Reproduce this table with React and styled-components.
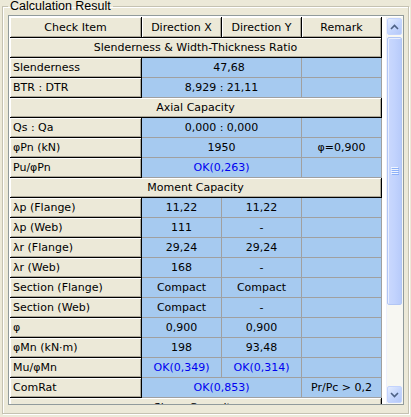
import React from 'react';
import styled, { createGlobalStyle, css } from 'styled-components';

const GlobalStyle = createGlobalStyle`
  html, body {
    margin: 0;
    padding: 0;
    background: #ece9d8;
  }
  body {
    width: 411px;
    height: 417px;
    overflow: hidden;
    font-family: "DejaVu Sans", "Liberation Sans", sans-serif;
    font-size: 11px;
    color: #000;
  }
`;

const Group = styled.fieldset`
  box-sizing: border-box;
  margin: 0 0 0 2px;
  width: 407px;
  height: 414px;
  padding: 0 0 0 5px;
  border: 1px solid #c5c2b2;
  box-shadow: inset 1px 1px #fff, 1px 1px #fff;
  border-radius: 0;
`;

const Legend = styled.legend`
  margin-left: 0;
  padding: 0 2px;
  font-family: "Liberation Sans", Arial, sans-serif;
  font-size: 12.5px;
  line-height: 13px;
  color: #000;
`;

const Frame = styled.div`
  box-sizing: border-box;
  width: 396px;
  height: 390px;
  margin-top: 2px;
  padding: 1px 0 0 1px;
  border: 1px solid #919b9c;
  background: #fff;
  display: flex;
  overflow: hidden;
`;

const Table = styled.div`
  width: 372px;
  display: flex;
  flex-direction: column;
  flex-shrink: 0;
`;

const Row = styled.div`
  display: grid;
  grid-template-columns: 132px 80px 80px 80px;
  height: ${(p) => (p.tall ? 21 : 20)}px;
  flex-shrink: 0;
`;

const raised = css`
  box-sizing: border-box;
  background: #ece9d8;
  border-right: 1px solid #000;
  border-bottom: 1px solid #000;
  box-shadow: inset 1px 1px #fff, inset -1px -1px #aca899;
  white-space: nowrap;
  overflow: hidden;
`;

const HeadCell = styled.div`
  ${raised};
  display: flex;
  align-items: center;
  justify-content: center;
`;

const SectionCell = styled.div`
  ${raised};
  grid-column: 1 / -1;
  display: flex;
  align-items: center;
  justify-content: center;
`;

const LabelCell = styled.div`
  ${raised};
  display: flex;
  align-items: center;
  padding-left: 3px;
`;

const DataCell = styled.div`
  box-sizing: border-box;
  background: #a6caf0;
  border-right: 1px solid #a0a0a0;
  border-bottom: 1px solid #a0a0a0;
  display: flex;
  align-items: center;
  justify-content: center;
  white-space: nowrap;
  padding-left: ${(p) => p.shift || 0}px;
  color: ${(p) => (p.ok ? '#0000f0' : '#000')};
  grid-column: ${(p) => (p.span ? `span ${p.span}` : 'auto')};
`;

const ScrollBar = styled.div`
  width: 17px;
  margin-left: 4px;
  display: flex;
  flex-direction: column;
  background: #f7f7f2;
  border-left: 1px solid #eef0fb;
`;

const ArrowButton = styled.div`
  box-sizing: border-box;
  height: 17px;
  margin: 1px 1px 1px 0;
  border: 1px solid #c3d3fd;
  border-radius: 2px;
  background: linear-gradient(135deg, #e4ecfe 0%, #c4d5fd 55%, #b4c8f8 100%);
  display: flex;
  align-items: center;
  justify-content: center;
  flex-shrink: 0;
`;

const Thumb = styled.div`
  box-sizing: border-box;
  height: 268px;
  margin: 1px 1px 0 0;
  border: 1px solid #b2c6f4;
  border-radius: 2px;
  background: linear-gradient(90deg, #cad8fd 0%, #c2d3fd 50%, #b8cbfa 100%);
  box-shadow: inset 1px 1px #e8eefe;
  display: flex;
  align-items: center;
  justify-content: center;
  flex-shrink: 0;
`;

const Spacer = styled.div`
  flex: 1;
`;

const Chevron = ({ down }) => (
  <svg width="9" height="6" viewBox="0 0 9 6">
    <polyline
      points={down ? '1,1 4.5,4.5 8,1' : '1,5 4.5,1.5 8,5'}
      fill="none"
      stroke="#4d6185"
      strokeWidth="1.6"
    />
  </svg>
);

const Grip = () => (
  <svg width="8" height="8" viewBox="0 0 8 8">
    {[0, 2, 4, 6].map((y) => (
      <g key={y}>
        <line x1="0" y1={y + 0.5} x2="7" y2={y + 0.5} stroke="#eef4fe" />
        <line x1="1" y1={y + 1.5} x2="8" y2={y + 1.5} stroke="#8cb0f8" />
      </g>
    ))}
  </svg>
);

const rows = [
  { section: 'Slenderness & Width-Thickness Ratio' },
  { label: 'Slenderness', merged: '47,68', shift: 15 },
  { label: 'BTR : DTR', merged: '8,929 : 21,11' },
  { section: 'Axial Capacity' },
  { label: 'Qs : Qa', merged: '0,000 : 0,000' },
  { label: 'φPn (kN)', merged: '1950', remark: 'φ=0,900' },
  { label: 'Pu/φPn', merged: 'OK(0,263)', ok: true },
  { section: 'Moment Capacity' },
  { label: 'λp (Flange)', x: '11,22', y: '11,22' },
  { label: 'λp (Web)', x: '111', y: '-' },
  { label: 'λr (Flange)', x: '29,24', y: '29,24' },
  { label: 'λr (Web)', x: '168', y: '-' },
  { label: 'Section (Flange)', x: 'Compact', y: 'Compact' },
  { label: 'Section (Web)', x: 'Compact', y: '-' },
  { label: 'φ', x: '0,900', y: '0,900' },
  { label: 'φMn (kN·m)', x: '198', y: '93,48' },
  { label: 'Mu/φMn', x: 'OK(0,349)', y: 'OK(0,314)', ok: true },
  { label: 'ComRat', merged: 'OK(0,853)', ok: true, remark: 'Pr/Pc > 0,2' },
  { section: 'Shear Capacity' },
];

const ResultRow = ({ row }) => {
  if (row.section) {
    return (
      <Row>
        <SectionCell>{row.section}</SectionCell>
      </Row>
    );
  }
  return (
    <Row>
      <LabelCell>{row.label}</LabelCell>
      {row.merged !== undefined ? (
        <DataCell span={2} ok={row.ok} shift={row.shift}>
          {row.merged}
        </DataCell>
      ) : (
        <>
          <DataCell ok={row.ok}>{row.x}</DataCell>
          <DataCell ok={row.ok}>{row.y}</DataCell>
        </>
      )}
      <DataCell>{row.remark}</DataCell>
    </Row>
  );
};

const App = () => {
  return (
    <>
      <GlobalStyle />
      <Group>
        <Legend>Calculation Result</Legend>
        <Frame>
          <Table>
            <Row tall>
              <HeadCell>Check Item</HeadCell>
              <HeadCell>Direction X</HeadCell>
              <HeadCell>Direction Y</HeadCell>
              <HeadCell>Remark</HeadCell>
            </Row>
            {rows.map((row, index) => (
              <ResultRow key={index} row={row} />
            ))}
          </Table>
          <ScrollBar>
            <ArrowButton>
              <Chevron />
            </ArrowButton>
            <Thumb>
              <Grip />
            </Thumb>
            <Spacer />
            <ArrowButton>
              <Chevron down />
            </ArrowButton>
          </ScrollBar>
        </Frame>
      </Group>
    </>
  );
};

export default App;
